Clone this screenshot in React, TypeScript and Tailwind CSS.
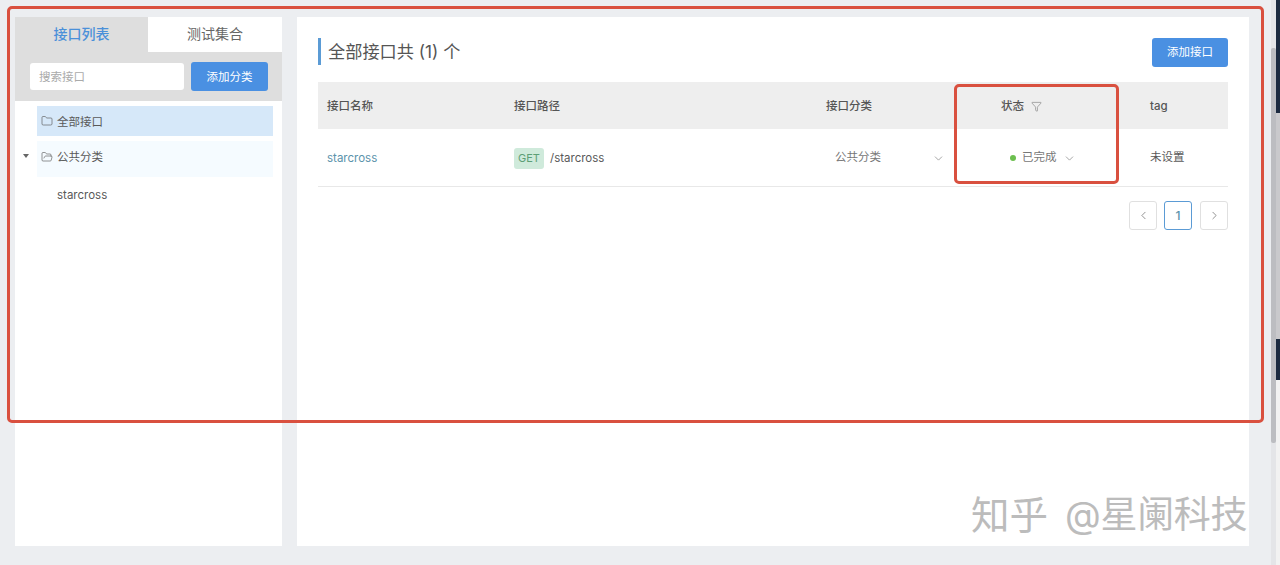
import React from "react";
import { Folder, FolderOpen, ChevronDown, ChevronLeft, ChevronRight, Filter } from "lucide-react";

const F = '"Inter","Noto Sans CJK SC",sans-serif';

export default function App() {
  return (
    <div className="relative w-[1280px] h-[565px] overflow-hidden bg-[#eceef1] flex text-[#595959]" style={{ fontFamily: F }}>
      {/* main area */}
      <div className="w-[1271px] shrink-0 pl-[15px] pt-[17px] pb-[19px] flex gap-[15px] h-[565px]">
        {/* sidebar */}
        <aside className="w-[267px] shrink-0 bg-white flex flex-col">
          <div className="flex h-[35px] text-[14px]">
            <div className="w-[133px] bg-[#dedede] text-[#4a90d9] font-medium flex items-center justify-center pb-[2px]">接口列表</div>
            <div className="flex-1 bg-white flex items-center justify-center text-[#666] pb-[2px]">测试集合</div>
          </div>
          <div className="h-[49px] bg-[#dedede] flex items-center pl-[15px] pr-[14px] gap-[7px]">
            <div className="w-[154px] h-[27px] bg-white rounded-[3px] text-[11.5px] text-[#aaa] flex items-center pl-[9px] pt-[2px]">搜索接口</div>
            <div className="w-[77px] h-[29px] bg-[#4a90e2] text-white rounded-[3px] text-[11.5px] flex items-center justify-center pt-[2px]">添加分类</div>
          </div>
          <div className="pt-[5px] pl-[22px] pr-[9px] text-[11.5px] flex flex-col">
            <div className="h-[30px] bg-[#d6e8f9] flex items-center pl-[4px] gap-[4px] pt-[3px]">
              <Folder size={12} strokeWidth={1.3} className="-mt-[3px]" /><span>全部接口</span>
            </div>
            <div className="relative mt-[5px] h-[36px] bg-[#f5fbff] flex items-center pl-[4px] gap-[4px] pb-[3px]">
              <span className="absolute left-[-14px] top-[13px] w-0 h-0 border-l-[3px] border-r-[3px] border-t-[4px] border-l-transparent border-r-transparent border-t-[#666]"></span>
              <FolderOpen size={12} strokeWidth={1.3} className="-mt-[2px]" /><span>公共分类</span>
            </div>
            <div className="h-[36px] flex items-center pl-[20px] pt-[2px]">starcross</div>
          </div>
        </aside>
        {/* content */}
        <section className="w-[952px] shrink-0 bg-white pl-[21px] pr-[21px]">
          <div className="flex items-start justify-between pt-[21px] h-[65px]">
            <div className="border-l-[3px] border-[#5b9bd5] h-[27px] pl-[7px] flex items-center text-[17.2px] text-[#555] leading-none">全部接口共 (1) 个</div>
            <div className="w-[76px] h-[29px] bg-[#4a90e2] text-white rounded-[3px] text-[11.5px] flex items-center justify-center pt-[1px]">添加接口</div>
          </div>
          <div className="flex h-[47px] bg-[#eeeeee] items-center text-[11.5px] font-medium text-[#555] pt-[2px]">
            <div className="w-[196px] pl-[9px]">接口名称</div>
            <div className="w-[312px]">接口路径</div>
            <div className="w-[175px]">接口分类</div>
            <div className="w-[149px] flex items-center">
              <span>状态</span>
              <Filter size={11} strokeWidth={1.3} className="ml-[7px] text-[#777]" />
            </div>
            <div>tag</div>
          </div>
          <div className="flex h-[58px] items-center text-[11.5px] border-b border-[#e8e8e8] pt-[1px]">
            <div className="w-[187px] ml-[9px] text-[#5b93ab] pt-[1px]">starcross</div>
            <div className="w-[312px] flex items-center gap-[6px]">
              <span className="w-[30px] h-[21px] rounded-[3px] bg-[#cfeadb] text-[#5d9f76] text-[11px] flex items-center justify-center">GET</span>
              <span className="pt-[1px]">/starcross</span>
            </div>
            <div className="w-[175px] pl-[9px] flex items-center text-[#777] relative">
              <span className="whitespace-nowrap">公共分类</span>
              <ChevronDown size={13} strokeWidth={1.2} className="absolute left-[106px] text-[#777]" />
            </div>
            <div className="w-[149px] pl-[9px] flex items-center text-[#777]">
              <span className="w-[6px] h-[6px] rounded-full bg-[#6cbf4f] mr-[6px]"></span>
              <span>已完成</span>
              <ChevronDown size={13} strokeWidth={1.2} className="ml-[6px] text-[#777]" />
            </div>
            <div>未设置</div>
          </div>
          <div className="flex justify-end gap-[7px] mt-[14px] text-[12px]">
            <div className="w-[28px] h-[29px] border border-[#e0e0e0] rounded-[3px] flex items-center justify-center text-[#666]"><ChevronLeft size={13} strokeWidth={1.3} /></div>
            <div className="w-[28px] h-[29px] border border-[#5b9bd5] rounded-[3px] flex items-center justify-center text-[#5b93ab] font-medium">1</div>
            <div className="w-[28px] h-[29px] border border-[#e0e0e0] rounded-[3px] flex items-center justify-center text-[#666] ml-[1px]"><ChevronRight size={13} strokeWidth={1.3} /></div>
          </div>
        </section>
      </div>
      {/* scrollbar */}
      <div className="w-[5px] shrink-0 relative bg-[#e4e5e8]">
        <div className="absolute top-[48px] left-0 w-[5px] h-[395px] bg-[#bcbdc1] rounded-[2px]"></div>
      </div>
      {/* page edge behind */}
      <div className="w-[4px] shrink-0 flex flex-col bg-[#f2f2f2]">
        <div className="h-[113px] bg-[#1c2b40] shrink-0"></div>
        <div className="h-[226px] bg-[#c9c9cc] shrink-0"></div>
        <div className="h-[41px] bg-[#1c2b40] shrink-0"></div>
      </div>
      {/* red annotations */}
      <div className="absolute left-[7px] top-[6px] w-[1257px] h-[417px] border-[3px] border-[#d9503f] rounded-[5px] pointer-events-none"></div>
      <div className="absolute left-[954px] top-[84px] w-[165px] h-[100px] border-[3px] border-[#d9503f] rounded-[5px] pointer-events-none"></div>
      {/* watermark */}
      <div className="absolute left-[971px] top-[493px] text-[37px] leading-[44px] text-[#bcbcbc] whitespace-nowrap pointer-events-none flex">
        <span className="text-[38.5px]">知乎</span>
        <span className="ml-[17px] tracking-[-0.3px]">@星阑科技</span>
      </div>
    </div>
  );
}
